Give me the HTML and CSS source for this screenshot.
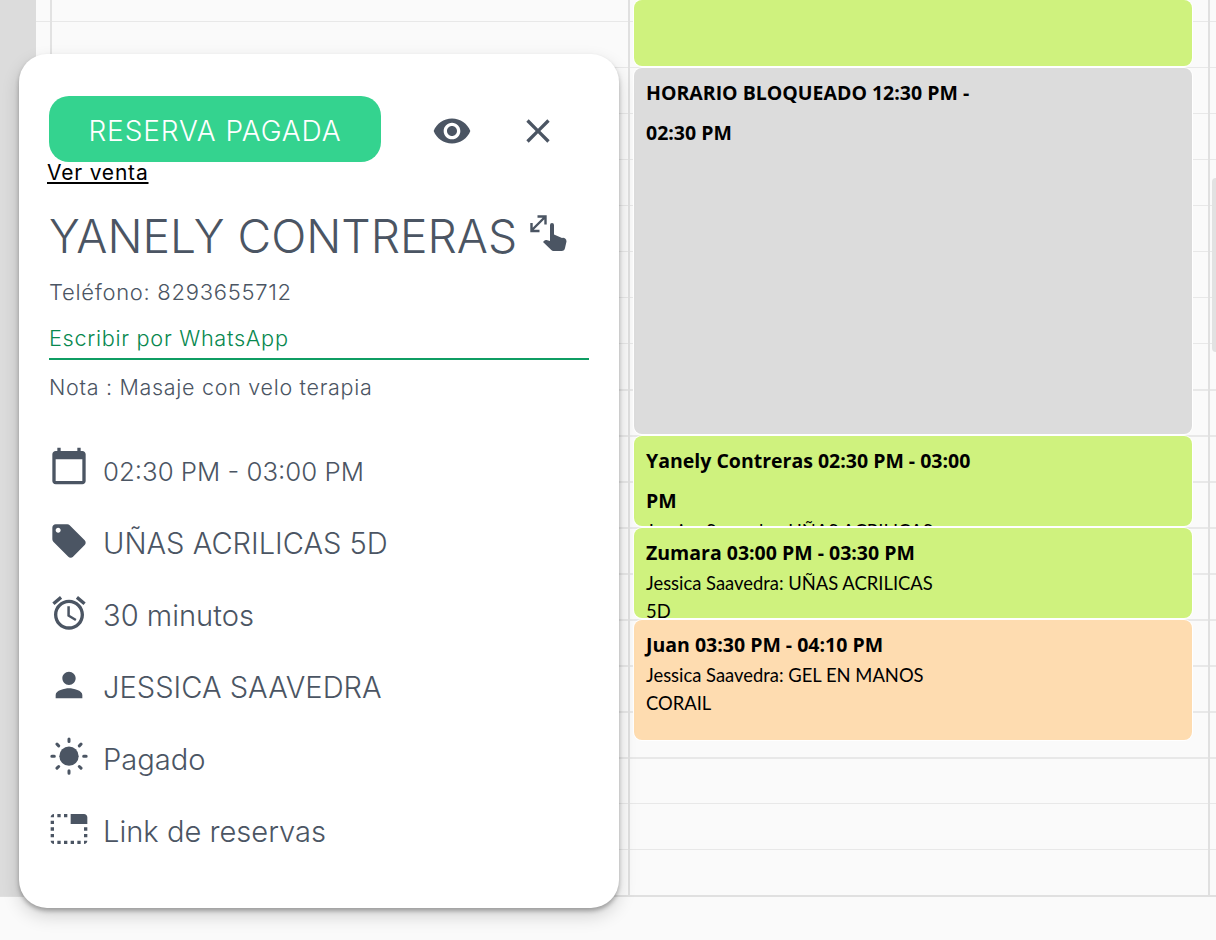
FILE: index.html
```html
<!DOCTYPE html>
<html lang="es">

<head>
    <meta charset="UTF-8">
    <meta name="viewport" content="width=device-width, initial-scale=1.0">
    <title>Detalle de reserva</title>
    <link rel="stylesheet" href="styles.css">
</head>

<body>
    <div class="page">
        <!-- Calendario de fondo -->
        <div class="calendar">
            <div class="gutter"></div>
            <div class="hours"></div>
            <div class="blank-column"></div>
            <div class="day">
                <div class="event event-green event-first"></div>
                <div class="event event-gray event-blocked">
                    <p class="event-title">HORARIO BLOQUEADO 12:30 PM - 02:30 PM</p>
                </div>
                <div class="event event-green event-short">
                    <p class="event-title">Yanely Contreras 02:30 PM - 03:00 PM</p>
                    <p class="event-text">Jessica Saavedra: UÑAS ACRILICAS 5D</p>
                </div>
                <div class="event event-green event-short">
                    <p class="event-title">Zumara 03:00 PM - 03:30 PM</p>
                    <p class="event-text">Jessica Saavedra: UÑAS ACRILICAS 5D</p>
                </div>
                <div class="event event-orange event-long">
                    <p class="event-title">Juan 03:30 PM - 04:10 PM</p>
                    <p class="event-text">Jessica Saavedra: GEL EN MANOS CORAIL</p>
                </div>
            </div>
        </div>
        <div class="footer-strip"></div>
        <div class="scroll-thumb"></div>

        <!-- Detalle de la reserva -->
        <div class="modal">
            <div class="modal-top">
                <button class="status-button">RESERVA PAGADA</button>
                <span class="top-icon top-icon-eye">
                    <svg viewBox="0 0 24 24"><path d="M12 4.5C7 4.5 2.73 7.61 1 12c1.73 4.39 6 7.5 11 7.5s9.27-3.11 11-7.5c-1.73-4.39-6-7.5-11-7.5zM12 17c-2.76 0-5-2.24-5-5s2.24-5 5-5 5 2.24 5 5-2.24 5-5 5zm0-8c-1.66 0-3 1.34-3 3s1.34 3 3 3 3-1.34 3-3-1.34-3-3-3z"/></svg>
                </span>
                <span class="top-icon">
                    <svg viewBox="0 0 24 24"><path d="M19 6.41L17.59 5 12 10.59 6.41 5 5 6.41 10.59 12 5 17.59 6.41 19 12 13.41 17.59 19 19 17.59 13.41 12z"/></svg>
                </span>
            </div>
            <a class="sale-link" href="#">Ver venta</a>
            <div class="client-row">
                <h1 class="client-name">YANELY CONTRERAS</h1>
                <svg class="pinch-icon" viewBox="0 0 40 40">
                    <path class="pinch-arrow" d="M3 16L16 3M8.5 2.5h8v8M2.5 9v8h8"/>
                    <path d="M21 11a2 2 0 0 1 4 0v9.5l8 3.5a3.5 3.5 0 0 1 4.5 3.5L36 34a3.5 3.5 0 0 1-3.5 3H24.5a3 3 0 0 1-2.2-1L14 28l1.5-1.5a2 2 0 0 1 2-.5l3.5 1z"/>
                </svg>
            </div>
            <p class="info-line">Teléfono: 8293655712</p>
            <a class="whatsapp-link" href="#">Escribir por WhatsApp</a>
            <p class="info-line info-note">Nota : Masaje con velo terapia</p>

            <ul class="detail-list">
                <li class="detail-row detail-time">
                    <svg viewBox="0 0 24 24"><path d="M20 3h-1V1h-2v2H7V1H5v2H4c-1.1 0-2 .9-2 2v16c0 1.1.9 2 2 2h16c1.1 0 2-.9 2-2V5c0-1.1-.9-2-2-2zm0 18H4V8h16v13z"/></svg>
                    <span>02:30 PM - 03:00 PM</span>
                </li>
                <li class="detail-row">
                    <svg viewBox="0 0 24 24"><path d="M21.41 11.58l-9-9C12.05 2.22 11.55 2 11 2H4c-1.1 0-2 .9-2 2v7c0 .55.22 1.05.59 1.42l9 9c.36.36.86.58 1.41.58.55 0 1.05-.22 1.41-.59l7-7c.37-.36.59-.86.59-1.41 0-.55-.23-1.06-.59-1.42zM5.5 7C4.67 7 4 6.33 4 5.5S4.67 4 5.5 4 7 4.67 7 5.5 6.33 7 5.5 7z"/></svg>
                    <span>UÑAS ACRILICAS 5D</span>
                </li>
                <li class="detail-row">
                    <svg viewBox="0 0 24 24"><path d="M22 5.72l-4.6-3.86-1.29 1.53 4.6 3.86L22 5.72zM7.88 3.39L6.6 1.86 2 5.71l1.29 1.53 4.59-3.85zM12.5 8H11v6l4.75 2.85.75-1.23-4-2.37V8zM12 4c-4.97 0-9 4.03-9 9s4.03 9 9 9 9-4.03 9-9-4.03-9-9-9zm0 16c-3.87 0-7-3.13-7-7s3.13-7 7-7 7 3.13 7 7-3.13 7-7 7z"/></svg>
                    <span>30 minutos</span>
                </li>
                <li class="detail-row">
                    <svg viewBox="0 0 24 24"><path d="M12 12c2.21 0 4-1.79 4-4s-1.79-4-4-4-4 1.79-4 4 1.79 4 4 4zm0 2c-2.67 0-8 1.34-8 4v2h16v-2c0-2.66-5.33-4-8-4z"/></svg>
                    <span>JESSICA SAAVEDRA</span>
                </li>
                <li class="detail-row">
                    <svg viewBox="0 0 24 24">
                        <circle cx="12" cy="11.5" r="5.8"/>
                        <path class="sun-rays" d="M12 1.2v1.5M12 20.3v1.5M1.7 11.5h1.5M20.800 11.5h1.500M4.800 4.300l1 1M18.200 17.700l1 1M19.200 4.300l-1 1M5.800 17.700l-1 1"/>
                    </svg>
                    <span>Pagado</span>
                </li>
                <li class="detail-row">
                    <svg viewBox="0 0 24 24"><path d="M1 9h2V7H1v2zm0 4h2v-2H1v2zm0-8h2V3c-1.1 0-2 .9-2 2zm8 16h2v-2H9v2zm-8-4h2v-2H1v2zm2 4v-2H1c0 1.1.9 2 2 2zM21 3h-8v6h10V5c0-1.1-.9-2-2-2zm0 14h2v-2h-2v2zM9 5h2V3H9v2zM5 21h2v-2H5v2zM5 5h2V3H5v2zm16 16c1.1 0 2-.9 2-2h-2v2zm0-8h2v-2h-2v2zm-8 8h2v-2h-2v2zm4 0h2v-2h-2v2z"/></svg>
                    <span>Link de reservas</span>
                </li>
            </ul>
        </div>
    </div>
</body>

</html>
```

FILE: styles.css
```css
* {
    box-sizing: border-box;
}

body {
    margin: 0;
    font-family: "Inter", sans-serif;
    background-color: #fafafa;
}

.page {
    position: relative;
    height: 940px;
    overflow: hidden;
}

.calendar {
    display: flex;
    height: 896px;
    background-image: repeating-linear-gradient(to bottom, transparent 0, transparent 21px, #e8e8e8 21px, #e8e8e8 22.5px, transparent 22.5px, transparent 46px);
}

.gutter {
    width: 36px;
    background-color: #dcdcdc;
}

.hours {
    width: 16px;
    border-right: 2px solid #e2e2e2;
}

.blank-column {
    width: 576px;
}

.day {
    width: 558px;
    padding: 0 16px 0 4px;
    border-left: 2px solid #e0e0e0;
    border-right: 2px solid #e0e0e0;
    box-sizing: content-box;
}

.event {
    margin-bottom: 2px;
    padding: 5px 12px 0;
    border-radius: 8px;
    box-shadow: 0 0 0 1px #fff;
    overflow: hidden;
    color: #000;
}

.event-first {
    height: 66px;
}

.event-blocked {
    height: 366px;
}

.event-short {
    height: 90px;
}

.event-long {
    height: 120px;
}

.event-green {
    background-color: #cff27e;
}

.event-gray {
    background-color: #dcdcdc;
}

.event-orange {
    background-color: #fedcb0;
}

.event-title {
    margin: 0 0 -4px;
    max-width: 340px;
    font-family: "Open Sans", sans-serif;
    font-size: 19.5px;
    font-weight: 700;
    line-height: 40px;
}

.event-text {
    margin: 0;
    max-width: 300px;
    font-family: "Lato", sans-serif;
    font-size: 18.4px;
    line-height: 28px;
}

.footer-strip {
    height: 2px;
    margin-top: -1px;
    background-color: #e0e0e0;
}

.scroll-thumb {
    position: absolute;
    top: 178px;
    right: 0;
    width: 4px;
    height: 174px;
    border-radius: 4px 0 0 4px;
    background-color: #e2e2e2;
}

.modal {
    position: absolute;
    top: 54px;
    left: 19px;
    width: 600px;
    height: 854px;
    padding: 42px 30px 0;
    border-radius: 28px;
    background-color: #fff;
    box-shadow: 0 3px 4px rgba(0, 0, 0, 0.28), 0 8px 18px rgba(0, 0, 0, 0.16);
    color: #4b5563;
}

.modal-top {
    display: flex;
    align-items: center;
}

.status-button {
    width: 332px;
    height: 66px;
    padding: 3px 0 0;
    border: none;
    border-radius: 20px;
    background-color: #34d38f;
    color: #fff;
    font-family: "Inter", sans-serif;
    font-size: 28px;
    font-weight: 300;
    letter-spacing: 0.9px;
}

.top-icon {
    display: flex;
    width: 40px;
    height: 40px;
    margin-top: 4px;
    margin-left: 46px;
}

.top-icon-eye {
    margin-left: 51px;
}

.top-icon svg {
    width: 40px;
    height: 40px;
    fill: #4b5563;
}

.sale-link {
    display: inline-block;
    margin-left: -2px;
    color: #000;
    font-size: 21px;
    letter-spacing: 0.8px;
    line-height: 22px;
    text-decoration: underline;
}

.client-row {
    display: flex;
    align-items: center;
    margin-top: 22px;
}

.client-name {
    margin: 0;
    font-size: 46.2px;
    font-weight: 300;
    line-height: 60px;
}

.pinch-icon {
    width: 40px;
    height: 40px;
    margin-bottom: 4px;
    margin-left: 12px;
    fill: #4b5563;
}

.pinch-arrow {
    fill: none;
    stroke: #4b5563;
    stroke-width: 2.4;
}

.info-line {
    margin: 11px 0 0;
    font-size: 22px;
    font-weight: 300;
    letter-spacing: 0.7px;
    line-height: 30px;
}

.info-note {
    margin-top: 12px;
    font-size: 21.5px;
}

.whatsapp-link {
    display: block;
    margin-top: 16px;
    padding-bottom: 5px;
    border-bottom: 2px solid #0f9d63;
    color: #08884f;
    font-size: 21.7px;
    font-weight: 300;
    letter-spacing: 0.7px;
    line-height: 30px;
    text-decoration: none;
}

.detail-list {
    margin: 33px 0 0;
    padding: 0;
    list-style: none;
}

.detail-row {
    display: flex;
    align-items: center;
    height: 72px;
    font-size: 29.1px;
    font-weight: 300;
}

.detail-time {
    font-size: 25.8px;
}

.detail-row svg {
    flex: none;
    width: 40px;
    height: 40px;
    margin-right: 14px;
    margin-bottom: 4px;
    fill: #4b5563;
}

.detail-time svg {
    margin-bottom: 10px;
}

.sun-rays {
    fill: none;
    stroke: #4b5563;
    stroke-width: 1.8;
    stroke-linecap: round;
}
```
